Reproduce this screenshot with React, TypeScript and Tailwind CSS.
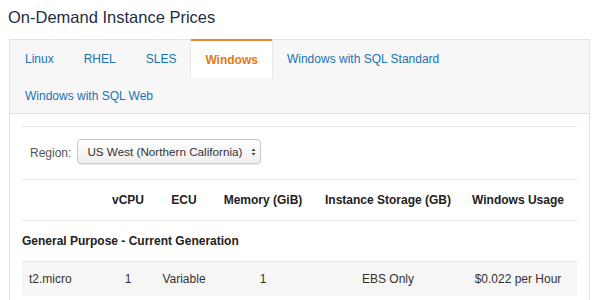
import React from "react";

const tabs1 = ["Linux", "RHEL", "SLES", "Windows", "Windows with SQL Standard"];

export default function App() {
  return (
    <div className="w-[600px] h-[300px] bg-white overflow-hidden text-[#333]" style={{ fontFamily: '"Liberation Sans", Arial, sans-serif' }}>
      <h1 className="pl-[8px] pt-[6px] h-[39px] text-[16.5px] leading-[22px] text-[#1f2d44]">On-Demand Instance Prices</h1>
      <div className="ml-[9px] w-[581px] border border-[#e2e2e2] border-b-0">
        <div className="bg-[#f7f7f7] border-b border-[#e2e2e2]">
          <div className="flex h-[38px]">
            {tabs1.map((t) =>
              t === "Windows" ? (
                <div key={t} className="px-[14px] flex items-center bg-white border-t-2 border-[#e8892b] -mt-px text-[#e47911] font-bold text-[12px] h-[39px] shadow-[1px_0_0_#e8e8e8,-1px_0_0_#e8e8e8]">
                  {t}
                </div>
              ) : (
                <div key={t} className="px-[15px] flex items-center text-[#1a72b6] text-[12px]">
                  {t}
                </div>
              )
            )}
          </div>
          <div className="flex h-[35px]">
            <div className="px-[15px] flex items-center text-[#1a72b6] text-[12px]">Windows with SQL Web</div>
          </div>
        </div>
        <div className="px-[12px] pt-[12px]">
          <div className="border-t border-[#e5e5e5]" />
          <div className="h-[52px] flex items-center pl-[8px] gap-[6px] text-[12px]">
            <span className="text-[#555]">Region:</span>
            <div className="h-[25px] w-[184px] -mt-[3px] border border-[#c8c8c8] rounded-[4px] bg-gradient-to-b from-white to-[#efefef] flex items-center pl-[9px] text-[#333] text-[11.7px] whitespace-nowrap shadow-[0_1px_1px_rgba(0,0,0,0.08)]">
              <span>US West (Northern California)</span>
              <svg className="ml-[9px]" width="5" height="8" viewBox="0 0 5 8">
                <path d="M2.5 0.5 L4.6 3 L0.4 3 Z M2.5 7.5 L4.6 5 L0.4 5 Z" fill="#444" />
              </svg>
            </div>
          </div>
          <div className="border-t border-[#e5e5e5]" />
          <div className="grid grid-cols-[76px_60px_52px_106px_144px_116px] h-[40px] items-center text-[12px] font-bold text-[#222] text-center">
            <div />
            <div>vCPU</div>
            <div>ECU</div>
            <div>Memory (GiB)</div>
            <div>Instance Storage (GB)</div>
            <div>Windows Usage</div>
          </div>
          <div className="border-t border-[#e5e5e5]" />
          <div className="h-[40px] flex items-center text-[12px] font-bold text-[#222]">General Purpose - Current Generation</div>
          <div className="grid grid-cols-[76px_60px_52px_106px_144px_116px] h-[35px] items-center text-[12px] text-[#333] text-center bg-[#f6f6f6] border-t border-[#e5e5e5]">
            <div className="text-left pl-[7px]">t2.micro</div>
            <div>1</div>
            <div>Variable</div>
            <div>1</div>
            <div>EBS Only</div>
            <div>$0.022 per Hour</div>
          </div>
          <div className="h-[10px]" />
        </div>
      </div>
    </div>
  );
}
